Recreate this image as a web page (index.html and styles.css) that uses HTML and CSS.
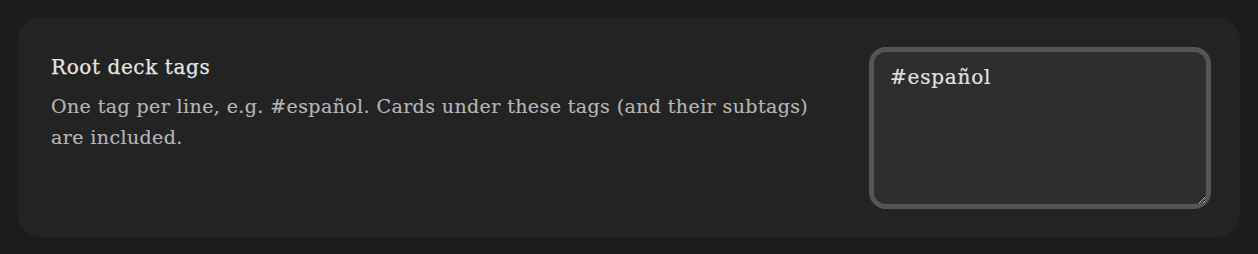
FILE: index.html
```html
<!DOCTYPE html>
<html lang="en">
<head>
<meta charset="utf-8">
<title>Root deck tags</title>
<link rel="stylesheet" href="styles.css">
</head>
<body>
<div class="page">
  <section class="setting">
    <div class="info">
      <div class="name">Root deck tags</div>
      <div class="desc">One tag per line, e.g. #español. Cards under these tags (and their subtags) are included.</div>
    </div>
    <div class="control">
      <textarea class="tags" spellcheck="false">#español</textarea>
    </div>
  </section>
</div>
</body>
</html>
```
FILE: styles.css
```css
html, body {
  margin: 0;
  padding: 0;
  background: #1c1c1c;
}
.page {
  padding: 18px;
  font-family: "DejaVu Serif", "Liberation Serif", serif;
}
.setting {
  display: flex;
  justify-content: space-between;
  align-items: flex-start;
  background: #232323;
  border-radius: 22px;
  padding: 29px 29px 28px 33px;
  gap: 40px;
}
.info {
  flex: 1;
  max-width: 778px;
  padding-top: 7px;
}
.name {
  font-size: 20px;
  letter-spacing: 0.6px;
  color: #e4e4e4;
  line-height: 26px;
  -webkit-text-stroke: 0.25px #e4e4e4;
}
.desc {
  margin-top: 11px;
  font-size: 19px;
  letter-spacing: 0.4px;
  line-height: 31px;
  color: #b4b4b4;
  -webkit-text-stroke: 0.2px #b4b4b4;
}
.control {
  flex: none;
}
.tags {
  display: block;
  box-sizing: border-box;
  width: 342px;
  height: 162px;
  background: #2e2e2e;
  border: 5px solid #555555;
  border-radius: 17px;
  padding: 12px 16px;
  color: #e0e0e0;
  -webkit-text-stroke: 0.2px #e0e0e0;
  font-family: "DejaVu Serif", "Liberation Serif", serif;
  font-size: 20px;
  letter-spacing: 0.8px;
  line-height: 26px;
  outline: none;
  resize: vertical;
  color-scheme: dark;
}
```
